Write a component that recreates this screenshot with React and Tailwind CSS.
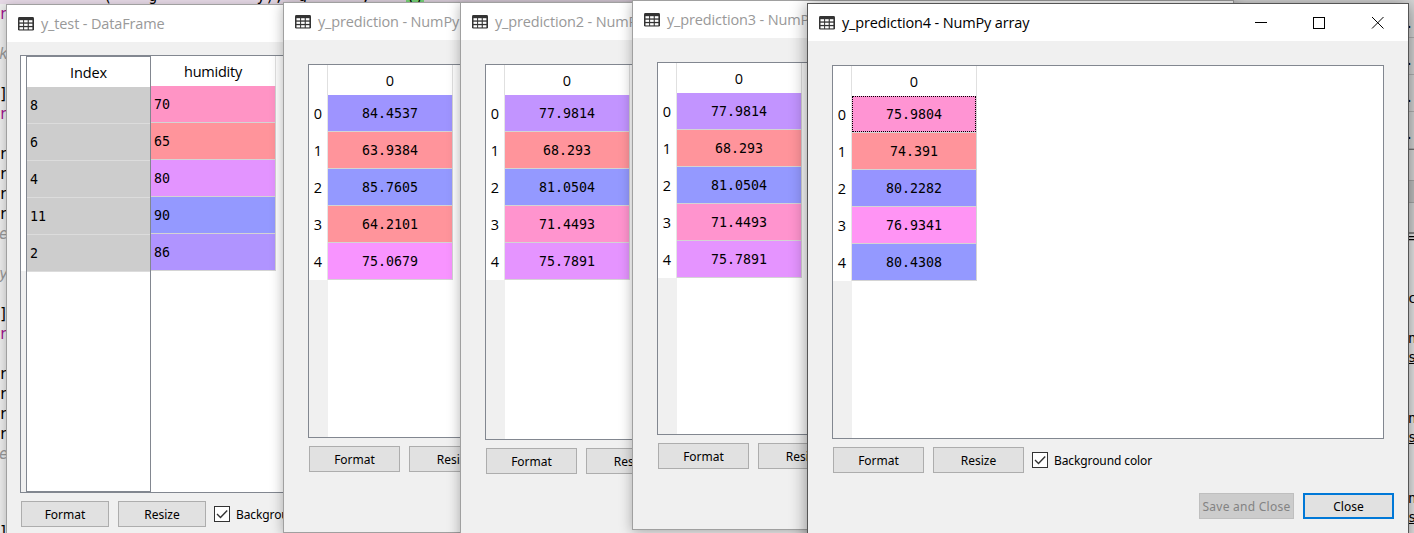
const MONO = "font-['DejaVu_Sans_Mono',monospace]";

function TableIcon() {
  return (
    <svg width="16" height="14" viewBox="0 0 16 14" className="shrink-0">
      <rect width="16" height="13.6" rx="1.4" fill="#333" />
      <g fill="#fff">
        {[3.2, 6.7, 10.2].map((y) =>
          [1.5, 6.1, 10.8].map((x) => <rect key={x + '-' + y} x={x} y={y} width="3.6" height="2.2" />)
        )}
      </g>
    </svg>
  );
}

function Button({ children, className }) {
  return (
    <div className={`flex h-[26px] shrink-0 items-center justify-center whitespace-nowrap pt-px ${className}`}>
      {children}
    </div>
  );
}

function Window({ title, className, active, children }) {
  return (
    <section
      className={`absolute flex flex-col overflow-hidden border bg-[#f0f0f0] ${className} ${
        active ? 'border-[#555]' : 'border-[#a0a0a0]'
      }`}
    >
      <header
        className={`flex h-[37px] shrink-0 items-center gap-[7px] whitespace-nowrap bg-white pl-[11px] font-['Open_Sans',sans-serif] text-[14.5px] tracking-[-0.14px] ${
          active ? 'text-black' : 'text-[#999]'
        }`}
      >
        <TableIcon />
        <span>{title}</span>
        {active && (
          <svg width="129" height="14" viewBox="0 0 129 14" className="mb-[2px] ml-auto mr-[24px]" fill="none" stroke="#000" shapeRendering="crispEdges">
            <path d="M0 7.5h12M58.500 2.500h11v11h-11z" />
            <path d="M117 2l11.500 11.500M128.500 2l-11.500 11.500" shapeRendering="auto" />
          </svg>
        )}
      </header>
      {children}
    </section>
  );
}

function Controls({ w, className }) {
  return (
    <div className={`flex shrink-0 items-center font-['Noto_Sans',sans-serif] text-[12px] ${className}`}>
      <Button className={`${w} border border-[#adadad] bg-[#e1e1e1]`}>Format</Button>
      <Button className={`${w} ml-[9px] border border-[#adadad] bg-[#e1e1e1]`}>Resize</Button>
      <svg width="16" height="16" viewBox="0 0 16 16" className="ml-2 shrink-0">
        <rect x=".5" y=".5" width="15" height="15" fill="#fff" stroke="#333" />
        <path d="M3 8l3.500 3.500L13.200 4.500" fill="none" stroke="#333" strokeWidth="1.400" />
      </svg>
      <span className="ml-[6px] whitespace-nowrap pt-px tracking-[-0.1px]">Background color</span>
    </div>
  );
}

function ArrayTable({ rows, focus, className }) {
  return (
    <div className={`flex shrink-0 overflow-hidden border border-[#828790] bg-white ${className}`}>
      <div className="w-[19px] shrink-0 bg-[#f0f0f0] font-['Open_Sans',sans-serif] text-[14.5px]">
        <div className="h-[30px] border-r border-[#e0e0e0] bg-white" />
        {rows.map((r, i) => (
          <div key={i} className="flex h-[37px] items-center justify-center border-r border-[#e5e5e5] bg-white pt-px">{i}</div>
        ))}
      </div>
      <div className="w-[125px] shrink-0">
        <div className="flex h-[30px] items-center justify-center border-r border-[#e0e0e0] pt-[2px] font-['Open_Sans',sans-serif] text-[14.5px]">0</div>
        {rows.map(([value, color], i) => (
          <div key={i} className={`h-[37px] border-b border-r border-[#d4d4d4] ${color}`}>
            <div className={`flex h-full items-center justify-center pt-[2px] text-[13.3px] ${MONO} ${focus && i === 0 ? 'border border-dotted border-black' : ''}`}>
              {value}
            </div>
          </div>
        ))}
      </div>
    </div>
  );
}

const humidity = [
  ['8', '70', 'bg-[#ff94c5]'],
  ['6', '65', 'bg-[#ff949b]'],
  ['4', '80', 'bg-[#e394ff]'],
  ['11', '90', 'bg-[#9499ff]'],
  ['2', '86', 'bg-[#b094ff]'],
];
const pred1 = [['84.4537', 'bg-[#9e94ff]'], ['63.9384', 'bg-[#ff949b]'], ['85.7605', 'bg-[#9499ff]'], ['64.2101', 'bg-[#ff949b]'], ['75.0679', 'bg-[#f894ff]']];
const pred2 = [['77.9814', 'bg-[#c294ff]'], ['68.293', 'bg-[#ff949b]'], ['81.0504', 'bg-[#9499ff]'], ['71.4493', 'bg-[#ff94ce]'], ['75.7891', 'bg-[#e594ff]']];
const pred4 = [['75.9804', 'bg-[#ff94d3]'], ['74.391', 'bg-[#ff949b]'], ['80.2282', 'bg-[#9694ff]'], ['76.9341', 'bg-[#ff94f4]'], ['80.4308', 'bg-[#9499ff]']];

const leftCode = [
  [14, 'ir', 'text-[#a0158c]'], [54, 'rk', 'italic text-[#999]'], [94, 's]', ''], [114, 'ir', 'text-[#a0158c]'],
  [154, 'tr', ''], [174, 'gr', ''], [194, 'gr', ''], [214, 'or', ''], [234, 're', 'italic text-[#999]'],
  [274, 'ty', 'italic text-[#999]'], [314, 's]', ''], [334, 'ir', 'text-[#a0158c]'], [374, 'tr', ''], [394, 'gr', ''],
  [414, 'gr', ''], [434, 'or', ''], [454, 're', 'italic text-[#999]'], [532, 's]', ''],
];
const rightCode = [[298, 'c'], [338, 'n'], [357, 's', 1], [418, 'n'], [437, 's', 1], [498, 'n'], [517, 's', 1]];

export default function App() {
  return (
    <main className="relative h-[533px] w-[1414px] overflow-hidden bg-[#ececec] text-black">
      <div className="absolute left-0 top-0 h-[4px] w-[640px] bg-[#e6d9e6]" />
      <div className={`absolute left-[103px] top-[-13px] whitespace-pre text-[15px] leading-[18px] ${MONO}`}>{'(    g           y),'}</div>
      <div className={`absolute left-[298px] top-[-13px] whitespace-pre text-[15px] leading-[18px] ${MONO}`}>{'g    _ ,'}</div>
      <div className={`absolute left-[406px] top-[-13px] bg-[#7fe07f] text-[15px] leading-[18px] ${MONO}`}>()</div>
      {leftCode.map(([y, t, c]) => (
        <div key={y} className={`absolute left-[-10px] -translate-y-1/2 text-[15px] leading-5 ${MONO} ${c}`} style={{ top: y }}>{t}</div>
      ))}
      <div className="absolute right-0 top-0 flex h-[234px] w-[780px] flex-col border-b-2 border-[#888] bg-[#d8d8d8]">
        <div className="h-[150px] border-b-2 border-[#777]" />
        <div className="h-[31px] border-b border-[#aaa] bg-[#dcdcdc]" />
        <div className="h-[22px] border-b border-[#aaa] bg-[#c4c4c4]" />
      </div>
      {[17, 54, 91, 128].map((y) => (
        <div key={y} className={`absolute left-[1405px] w-[20px] border-b border-[#b5b5b5] text-[14px] leading-5 ${MONO}`} style={{ top: y }}>
          <span className="relative -top-[4px]">.1</span>
        </div>
      ))}
      <div className={`absolute left-[1408px] top-[228px] text-[14px] leading-5 ${MONO}`}>=</div>
      {rightCode.map(([y, t, u]) => (
        <div key={y} className={`absolute left-[1408px] -translate-y-1/2 text-[14px] leading-5 ${MONO} ${u ? 'underline' : ''}`} style={{ top: y }}>{t}</div>
      ))}

      <Window title="y_test - DataFrame" className="left-[6px] top-[4px] h-[540px] w-[460px] shadow-[0_2px_10px_rgba(0,0,0,.25)]">
        <div className="ml-[13px] mt-[13px] flex h-[438px] w-[420px] shrink-0 border border-[#828790] bg-white">
          <div className="w-[5px] shrink-0 bg-[#f0f0f0]"><div className="h-[215px] bg-white" /></div>
          <div className="w-[125px] shrink-0 border border-[#828790] text-[14.5px]">
            <div className="flex h-[30px] items-center justify-center pt-px font-['Open_Sans',sans-serif] tracking-[-0.15px]">Index</div>
            {humidity.map(([i]) => (
              <div key={i} className={`flex h-[37px] items-center border-b border-[#dcdcdc] bg-[#cdcdcd] pl-[3px] pt-[2px] text-[13.3px] ${MONO}`}>{i}</div>
            ))}
          </div>
          <div className="w-[125px] shrink-0">
            <div className="flex h-[30px] items-center justify-center border-r border-[#e0e0e0] pt-[2px] font-['Open_Sans',sans-serif] text-[14.5px] tracking-[-0.25px]">humidity</div>
            {humidity.map(([i, v, color]) => (
              <div key={i} className={`flex h-[37px] items-center border-b border-r border-[#d4d4d4] pl-[3px] pt-[2px] text-[13.3px] ${MONO} ${color}`}>{v}</div>
            ))}
          </div>
        </div>
        <Controls w="w-[88px]" className="ml-[14px] mt-[8px]" />
      </Window>

      <Window title="y_prediction - NumPy array" className="left-[283px] top-[2px] h-[531px] w-[500px] shadow-[0_2px_12px_rgba(0,0,0,.3)]">
        <ArrayTable rows={pred1} className="ml-[24px] mt-[24px] h-[374px] w-[450px]" />
        <Controls w="w-[91px]" className="ml-[25px] mt-[8px]" />
      </Window>
      <Window title="y_prediction2 - NumPy array" className="left-[460px] top-[2px] h-[545px] w-[500px] shadow-[0_2px_12px_rgba(0,0,0,.3)]">
        <ArrayTable rows={pred2} className="ml-[24px] mt-[24px] h-[376px] w-[450px]" />
        <Controls w="w-[91px]" className="ml-[25px] mt-[8px]" />
      </Window>
      <Window title="y_prediction3 - NumPy array" className="left-[632px] top-0 h-[530px] w-[602px] shadow-[0_2px_12px_rgba(0,0,0,.3)]">
        <ArrayTable rows={pred2} className="ml-[24px] mt-[24px] h-[373px] w-[550px]" />
        <Controls w="w-[91px]" className="ml-[25px] mt-[8px]" />
      </Window>
      <Window active title="y_prediction4 - NumPy array" className="left-[807px] top-[3px] h-[545px] w-[602px] shadow-[0_2px_16px_rgba(0,0,0,.45)]">
        <ArrayTable rows={pred4} focus className="ml-[24px] mt-[24px] h-[374px] w-[552px]" />
        <Controls w="w-[91px]" className="ml-[25px] mt-[8px]" />
        <div className="mr-[14px] mt-[20px] flex justify-end gap-[9px] font-['Noto_Sans',sans-serif] text-[12px]">
          <Button className="w-[95px] border border-[#bfbfbf] bg-[#ccc] tracking-[0.25px] text-[#838383]">Save and Close</Button>
          <Button className="w-[91px] border-2 border-[#0078d7] bg-[#e1e1e1]">Close</Button>
        </div>
      </Window>
    </main>
  );
}
